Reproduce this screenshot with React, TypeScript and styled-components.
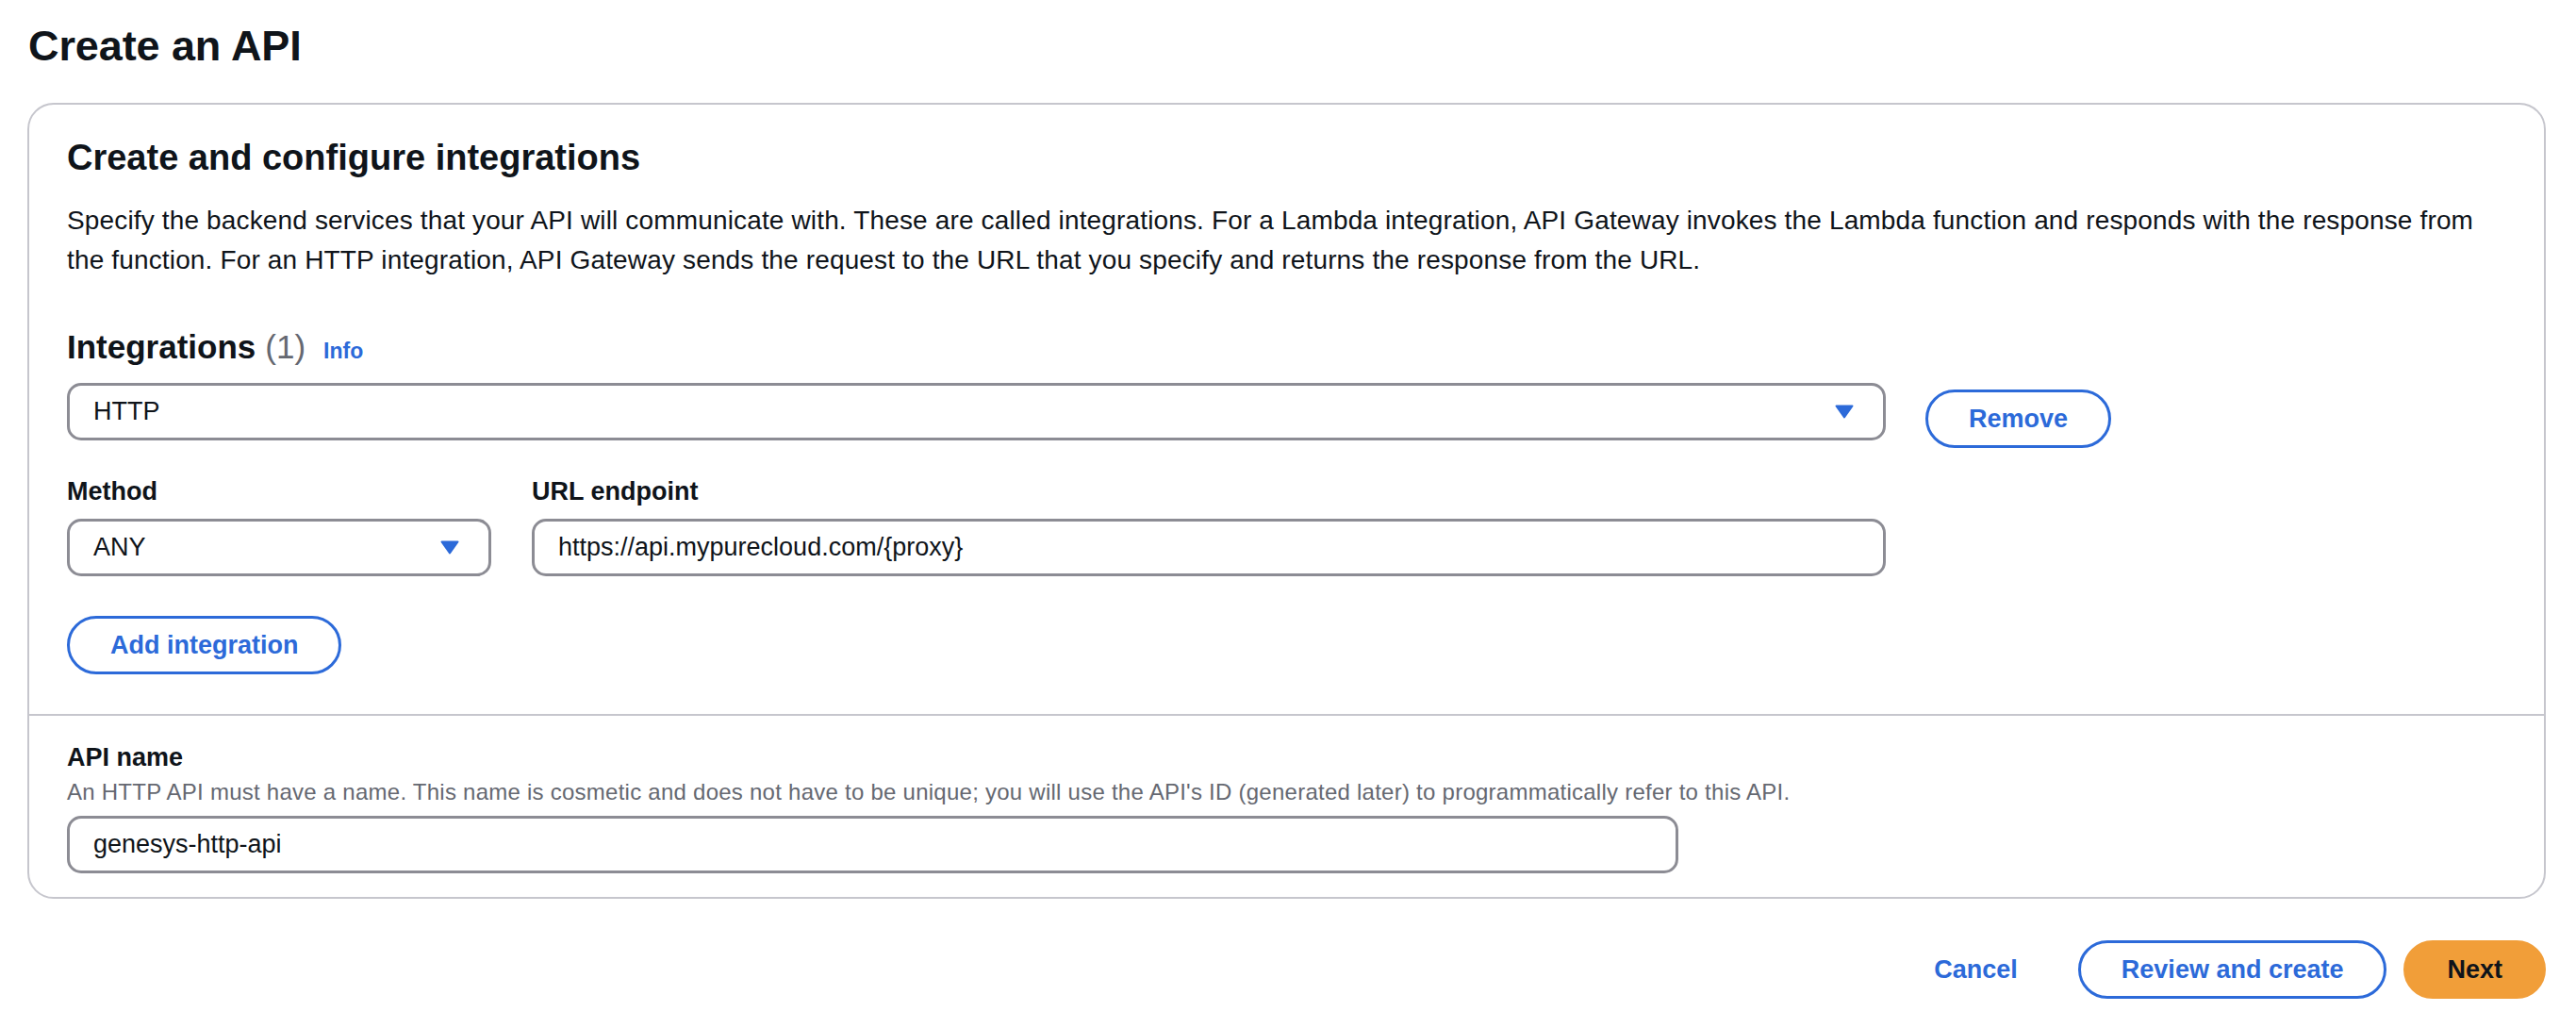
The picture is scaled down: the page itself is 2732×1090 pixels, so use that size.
import React from "react";
import styled, { createGlobalStyle } from "styled-components";

const GlobalStyle = createGlobalStyle`
  html, body {
    margin: 0;
    padding: 0;
    background: #ffffff;
  }
  body {
    font-family: "Liberation Sans", Arial, sans-serif;
    color: #0f141a;
  }
  * { box-sizing: border-box; }
`;

const BLUE = "#2c6ad9";
const TEXT = "#0f141a";
const MUTED = "#656871";
const FIELD_BORDER = "#8c8c94";
const CARD_BORDER = "#c6c6cd";

const Page = styled.main`
  padding: 21px 32px 0 29px;
`;

const Title = styled.h1`
  margin: 0 0 32px 1px;
  font-size: 45px;
  line-height: 56px;
  font-weight: 700;
  letter-spacing: -0.1px;
`;

const Card = styled.section`
  border: 2px solid ${CARD_BORDER};
  border-radius: 28px;
  background: #fff;
`;

const CardSection = styled.div<{ $pad: string }>`
  padding: ${(p) => p.$pad};
`;

const Divider = styled.hr`
  margin: 0;
  border: none;
  height: 2px;
  background: ${CARD_BORDER};
`;

const Heading = styled.h2`
  margin: 0;
  font-size: 38px;
  line-height: 46px;
  font-weight: 700;
`;

const Description = styled.p`
  margin: 23px 0 0;
  font-size: 28px;
  line-height: 42px;
  letter-spacing: 0.15px;
`;

const SubHeader = styled.div`
  display: flex;
  align-items: baseline;
  margin-top: 50px;
`;

const SubTitle = styled.h3`
  margin: 0;
  font-size: 35px;
  line-height: 42px;
  font-weight: 700;
`;

const Counter = styled.span`
  margin-left: 10px;
  font-size: 35px;
  font-weight: 400;
  color: ${MUTED};
`;

const InfoLink = styled.a`
  margin-left: 19px;
  font-size: 23px;
  font-weight: 700;
  color: ${BLUE};
  text-decoration: none;
`;

const IntegrationRow = styled.div`
  display: grid;
  grid-template-columns: 1929px auto;
  column-gap: 42px;
  margin-top: 17px;
`;

const FieldsGrid = styled.div`
  display: grid;
  grid-template-columns: 450px 1fr;
  column-gap: 43px;
  margin-top: 35px;
`;

const Field = styled.div`
  display: flex;
  flex-direction: column;
`;

const Label = styled.label`
  display: block;
  font-size: 27px;
  line-height: 38px;
  font-weight: 700;
  margin-bottom: 10px;
`;

const FieldHint = styled.div`
  font-size: 24px;
  line-height: 30px;
  letter-spacing: 0.25px;
  color: ${MUTED};
  margin: 3px 0 10px;
`;

const SelectBox = styled.div`
  display: flex;
  align-items: center;
  justify-content: space-between;
  height: 61px;
  padding: 0 31px 0 25px;
  border: 3px solid ${FIELD_BORDER};
  border-radius: 15px;
  font-size: 27px;
  color: ${TEXT};
  background: #fff;
`;

const TextInput = styled.input<{ $width?: string }>`
  display: block;
  width: ${(p) => p.$width ?? "100%"};
  height: 61px;
  padding: 0 25px;
  border: 3px solid ${FIELD_BORDER};
  border-radius: 15px;
  font-family: "Liberation Sans", Arial, sans-serif;
  font-size: 27px;
  color: ${TEXT};
  background: #fff;
  outline: none;
`;

const Button = styled.button<{ $variant?: "normal" | "primary" | "link" }>`
  height: 62px;
  padding: 0 43px;
  border-radius: 31px;
  font-family: "Liberation Sans", Arial, sans-serif;
  font-size: 27px;
  font-weight: 700;
  cursor: pointer;
  white-space: nowrap;
  border: 3px solid
    ${(p) =>
      p.$variant === "primary"
        ? "#f19e39"
        : p.$variant === "link"
        ? "transparent"
        : BLUE};
  background: ${(p) => (p.$variant === "primary" ? "#f19e39" : "#fff")};
  color: ${(p) => (p.$variant === "primary" ? TEXT : BLUE)};
`;

const RemoveCell = styled.div`
  padding-top: 7px;
`;

const AddRow = styled.div`
  margin-top: 42px;
`;

const Footer = styled.div`
  display: flex;
  justify-content: flex-end;
  align-items: center;
  gap: 18px;
  margin-top: 44px;
`;

const Caret = () => (
  <svg width="20" height="15" viewBox="0 0 20 15" aria-hidden="true">
    <path
      d="M1.5 1.5 H18.5 L10 13.5 Z"
      fill={BLUE}
      stroke={BLUE}
      strokeWidth="2"
      strokeLinejoin="round"
    />
  </svg>
);

export default function App() {
  return (
    <>
      <GlobalStyle />
      <Page>
        <Title>Create an API</Title>
        <Card>
          <CardSection $pad="33px 40px 42px">
            <Heading>Create and configure integrations</Heading>
            <Description>
              Specify the backend services that your API will communicate with. These are called
              integrations. For a Lambda integration, API Gateway invokes the Lambda function and
              responds with the response from the function. For an HTTP integration, API Gateway
              sends the request to the URL that you specify and returns the response from the URL.
            </Description>

            <SubHeader>
              <SubTitle>Integrations</SubTitle>
              <Counter>(1)</Counter>
              <InfoLink href="#">Info</InfoLink>
            </SubHeader>

            <IntegrationRow>
              <div>
                <SelectBox>
                  <span>HTTP</span>
                  <Caret />
                </SelectBox>
                <FieldsGrid>
                  <Field>
                    <Label>Method</Label>
                    <SelectBox>
                      <span>ANY</span>
                      <Caret />
                    </SelectBox>
                  </Field>
                  <Field>
                    <Label>URL endpoint</Label>
                    <TextInput readOnly value="https://api.mypurecloud.com/{proxy}" />
                  </Field>
                </FieldsGrid>
              </div>
              <RemoveCell>
                <Button $variant="normal">Remove</Button>
              </RemoveCell>
            </IntegrationRow>

            <AddRow>
              <Button $variant="normal">Add integration</Button>
            </AddRow>
          </CardSection>
          <Divider />
          <CardSection $pad="25px 40px 25px">
            <Label as="div" style={{ marginBottom: 0 }}>
              API name
            </Label>
            <FieldHint>
              An HTTP API must have a name. This name is cosmetic and does not have to be unique;
              you will use the API's ID (generated later) to programmatically refer to this API.
            </FieldHint>
            <TextInput readOnly value="genesys-http-api" $width="1709px" />
          </CardSection>
        </Card>
        <Footer>
          <Button $variant="link">Cancel</Button>
          <Button $variant="normal">Review and create</Button>
          <Button $variant="primary">Next</Button>
        </Footer>
      </Page>
    </>
  );
}
